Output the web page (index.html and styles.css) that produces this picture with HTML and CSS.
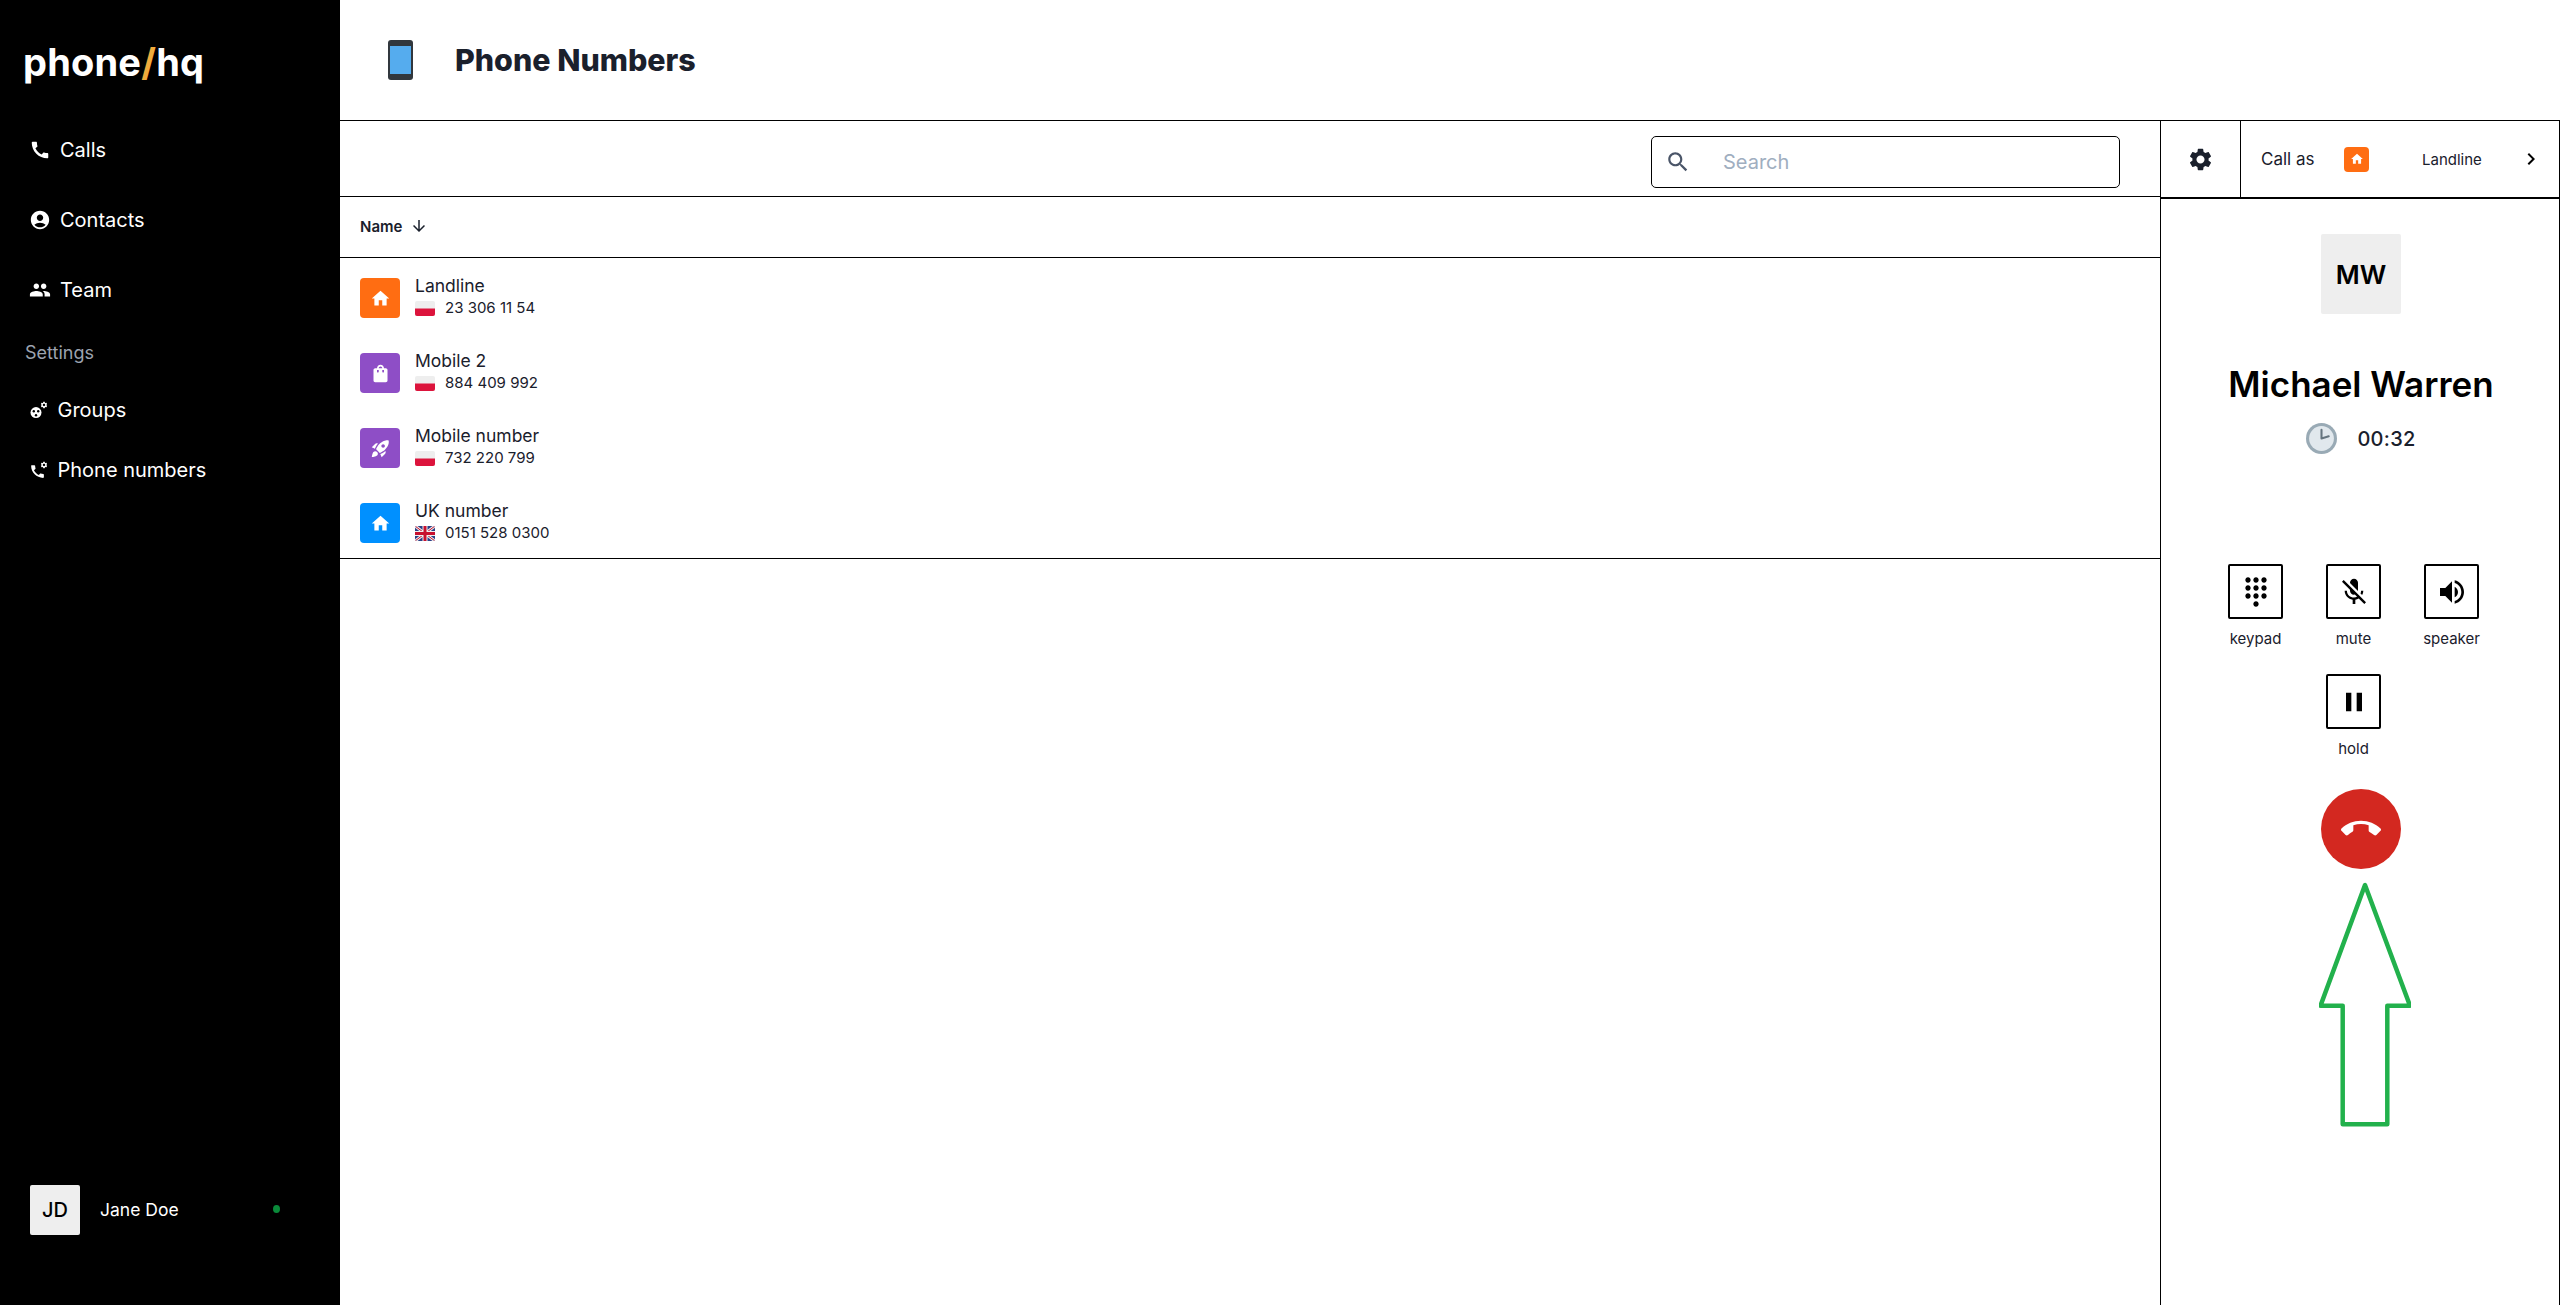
FILE: index.html
```html
<!DOCTYPE html>
<html lang="en">
<head>
<meta charset="utf-8">
<title>Phone Numbers</title>
<link rel="stylesheet" href="styles.css">
</head>
<body>
<svg class="defs" width="0" height="0" aria-hidden="true">
  <symbol id="i-call" viewBox="0 0 24 24"><path d="M20.01 15.38c-1.23 0-2.42-.2-3.53-.56-.35-.12-.74-.03-1.01.24l-1.57 1.97c-2.83-1.35-5.48-3.9-6.89-6.83l1.95-1.66c.27-.28.35-.67.24-1.02-.37-1.11-.56-2.3-.56-3.53 0-.54-.45-.99-.99-.99H4.19C3.65 3 3 3.24 3 3.99 3 13.28 10.73 21 20.01 21c.71 0 .99-.63.99-1.18v-3.45c0-.54-.45-.99-.99-.99z"/></symbol>
  <symbol id="i-account" viewBox="0 0 24 24"><path d="M12 2C6.48 2 2 6.48 2 12s4.48 10 10 10 10-4.48 10-10S17.52 2 12 2zm0 4c1.93 0 3.5 1.57 3.5 3.5S13.93 13 12 13s-3.5-1.57-3.5-3.5S10.07 6 12 6zm0 14c-2.03 0-4.43-.82-6.14-2.88C7.55 15.8 9.68 15 12 15s4.45.8 6.14 2.12C16.43 19.18 14.03 20 12 20z"/></symbol>
  <symbol id="i-people" viewBox="0 0 24 24"><path d="M16 11c1.66 0 2.99-1.34 2.99-3S17.66 5 16 5c-1.66 0-3 1.34-3 3s1.34 3 3 3zm-8 0c1.66 0 2.99-1.34 2.99-3S9.66 5 8 5C6.34 5 5 6.34 5 8s1.34 3 3 3zm0 2c-2.33 0-7 1.17-7 3.5V19h14v-2.5c0-2.33-4.67-3.5-7-3.5zm8 0c-.29 0-.62.02-.97.05 1.16.84 1.97 1.97 1.97 3.45V19h6v-2.5c0-2.33-4.67-3.5-7-3.5z"/></symbol>
  <symbol id="i-gear" viewBox="0 0 24 24"><path d="M19.14 12.94c.04-.3.06-.61.06-.94 0-.32-.02-.64-.07-.94l2.03-1.58c.18-.14.23-.41.12-.61l-1.92-3.32c-.12-.22-.37-.29-.59-.22l-2.39.96c-.5-.38-1.03-.7-1.62-.94l-.36-2.54c-.04-.24-.24-.41-.48-.41h-3.84c-.24 0-.43.17-.47.41l-.36 2.54c-.59.24-1.13.57-1.62.94l-2.39-.96c-.22-.08-.47 0-.59.22L2.74 8.87c-.12.21-.08.47.12.61l2.03 1.58c-.05.3-.09.63-.09.94s.02.64.07.94l-2.03 1.58c-.18.14-.23.41-.12.61l1.92 3.32c.12.22.37.29.59.22l2.39-.96c.5.38 1.03.7 1.62.94l.36 2.54c.05.24.24.41.48.41h3.84c.24 0 .44-.17.47-.41l.36-2.54c.59-.24 1.13-.56 1.62-.94l2.39.96c.22.08.47 0 .59-.22l1.92-3.32c.12-.22.07-.47-.12-.61l-2.01-1.58zM12 15.6c-1.98 0-3.6-1.62-3.6-3.6s1.62-3.6 3.6-3.6 3.6 1.62 3.6 3.6-1.62 3.6-3.6 3.6z"/></symbol>
  <symbol id="i-home" viewBox="0 0 24 24"><path d="M10 20v-6h4v6h5v-8h3L12 3 2 12h3v8z"/></symbol>
  <symbol id="i-bag" viewBox="0 0 24 24"><path d="M18 6h-2c0-2.21-1.79-4-4-4S8 3.79 8 6H6c-1.1 0-2 .9-2 2v12c0 1.1.9 2 2 2h12c1.1 0 2-.9 2-2V8c0-1.1-.9-2-2-2zm-8 4c0 .55-.45 1-1 1s-1-.45-1-1V8h2v2zm2-6c1.1 0 2 .9 2 2h-4c0-1.1.9-2 2-2zm4 6c0 .55-.45 1-1 1s-1-.45-1-1V8h2v2z"/></symbol>
  <symbol id="i-rocket" viewBox="0 0 24 24"><path d="M9.19 6.35c-2.04 2.29-3.44 5.58-3.57 5.89L2 10.69l4.05-4.05c.47-.47 1.15-.68 1.81-.55l1.33.26zM11.17 17s3.74-1.55 5.89-3.7c5.4-5.4 4.5-9.62 4.21-10.57-.95-.3-5.17-1.19-10.57 4.21C8.55 9.09 7 12.83 7 12.83L11.17 17zm6.48-2.19c-2.29 2.04-5.58 3.44-5.89 3.57L13.31 22l4.05-4.05c.47-.47.68-1.15.55-1.81l-.26-1.33zM9 18c0 .83-.34 1.58-.88 2.12C6.94 21.3 2 22 2 22s.7-4.94 1.88-6.12C4.42 15.34 5.17 15 6 15c1.66 0 3 1.34 3 3zm4-9c0-1.1.9-2 2-2s2 .9 2 2-.9 2-2 2-2-.9-2-2z"/></symbol>
  <symbol id="f-pl" viewBox="0 0 20 15"><rect width="20" height="15" rx="2" fill="#eeeeee"/><path d="M0 7.5h20V13a2 2 0 0 1-2 2H2a2 2 0 0 1-2-2z" fill="#dc143c"/></symbol>
  <symbol id="f-uk" viewBox="0 0 20 15"><clipPath id="uk-clip"><rect width="20" height="15" rx="2"/></clipPath><g clip-path="url(#uk-clip)"><rect width="20" height="15" fill="#2a3f86"/><path d="M0 0l20 15M20 0L0 15" stroke="#eeeeee" stroke-width="3"/><path d="M0 0l20 15M20 0L0 15" stroke="#c8102e" stroke-width="1"/><path d="M10 0v15M0 7.5h20" stroke="#eeeeee" stroke-width="5"/><path d="M10 0v15M0 7.5h20" stroke="#c8102e" stroke-width="3"/></g></symbol>
</svg>
<div class="app">
  <aside class="sidebar">
    <div class="logo">phone<span class="logo-slash">/</span>hq</div>
    <nav class="nav">
      <a class="nav-item"><svg class="nav-icon"><use href="#i-call"/></svg>Calls</a>
      <a class="nav-item"><svg class="nav-icon"><use href="#i-account"/></svg>Contacts</a>
      <a class="nav-item"><svg class="nav-icon"><use href="#i-people"/></svg>Team</a>
    </nav>
    <div class="nav-heading">Settings</div>
    <nav class="subnav">
      <a class="sub-item"><svg class="sub-icon" viewBox="0 0 24 24"><circle cx="8" cy="14.6" r="5.5"/><g fill="#000"><circle cx="5.8" cy="13.2" r="1.2"/><circle cx="10.2" cy="13.2" r="1.2"/><circle cx="8" cy="17.2" r="1.2"/></g><use href="#i-gear" x="12" y="3" width="8" height="8"/></svg>Groups</a>
      <a class="sub-item"><svg class="sub-icon" viewBox="0 0 24 24"><use href="#i-call" x="1" y="5" width="17" height="17"/><use href="#i-gear" x="12" y="3" width="8" height="8"/></svg>Phone numbers</a>
    </nav>
    <div class="user">
      <div class="avatar-sm">JD</div>
      <div class="user-name">Jane Doe</div>
      <span class="status-dot"></span>
    </div>
  </aside>
  <div class="content">
    <header class="page-header">
      <svg class="page-emoji" viewBox="0 0 25 40"><rect width="25" height="40" rx="3" fill="#31373d"/><rect x="2" y="6" width="21" height="28" fill="#55acee"/></svg>
      <h1 class="page-title">Phone Numbers</h1>
    </header>
    <div class="workspace">
      <main class="list-pane">
        <div class="toolbar">
          <label class="search">
            <svg class="search-icon" viewBox="0 0 24 24"><path d="M15.5 14h-.79l-.28-.27C15.41 12.59 16 11.11 16 9.5 16 5.91 13.09 3 9.5 3S3 5.91 3 9.5 5.91 16 9.5 16c1.61 0 3.09-.59 4.23-1.57l.27.28v.79l5 4.99L20.49 19l-4.99-5zm-6 0C7.01 14 5 11.99 5 9.5S7.01 5 9.5 5 14 7.01 14 9.5 11.99 14 9.5 14z"/></svg>
            <span class="search-placeholder">Search</span>
          </label>
        </div>
        <div class="table-head">
          <span>Name</span>
          <svg class="sort-icon" viewBox="0 0 24 24"><path d="M20 12l-1.41-1.41L13 16.17V4h-2v12.17l-5.58-5.59L4 12l8 8 8-8z"/></svg>
        </div>
        <ul class="rows">
          <li class="row">
            <span class="tile tile-orange"><svg class="tile-icon"><use href="#i-home"/></svg></span>
            <div class="row-text"><div class="row-name">Landline</div><div class="row-num"><svg class="flag"><use href="#f-pl"/></svg>23 306 11 54</div></div>
          </li>
          <li class="row">
            <span class="tile tile-purple"><svg class="tile-icon"><use href="#i-bag"/></svg></span>
            <div class="row-text"><div class="row-name">Mobile 2</div><div class="row-num"><svg class="flag"><use href="#f-pl"/></svg>884 409 992</div></div>
          </li>
          <li class="row">
            <span class="tile tile-purple"><svg class="tile-icon"><use href="#i-rocket"/></svg></span>
            <div class="row-text"><div class="row-name">Mobile number</div><div class="row-num"><svg class="flag"><use href="#f-pl"/></svg>732 220 799</div></div>
          </li>
          <li class="row">
            <span class="tile tile-blue"><svg class="tile-icon"><use href="#i-home"/></svg></span>
            <div class="row-text"><div class="row-name">UK number</div><div class="row-num"><svg class="flag"><use href="#f-uk"/></svg>0151 528 0300</div></div>
          </li>
        </ul>
      </main>
      <aside class="call-pane">
        <div class="call-top">
          <div class="gear-cell"><svg class="gear-icon"><use href="#i-gear"/></svg></div>
          <div class="call-as">
            <span class="call-as-label">Call as</span>
            <span class="tile-sm"><svg class="tile-sm-icon"><use href="#i-home"/></svg></span>
            <span class="call-as-name">Landline</span>
            <svg class="chevron" viewBox="0 0 24 24"><path d="M10 6L8.59 7.41 13.17 12l-4.58 4.59L10 18l6-6z"/></svg>
          </div>
        </div>
        <div class="call-body">
          <div class="avatar-lg">MW</div>
          <div class="caller">Michael Warren</div>
          <div class="timer">
            <svg class="clock" viewBox="0 0 30 30"><circle cx="15" cy="15" r="15" fill="#99aab5"/><circle cx="15" cy="15" r="12" fill="#e1e8ed"/><path d="M15 6.5V15l7-2.2" fill="none" stroke="#66757f" stroke-width="2" stroke-linecap="round" stroke-linejoin="round"/></svg>
            <span>00:32</span>
          </div>
          <div class="controls">
            <div class="control"><span class="control-btn"><svg class="control-icon" viewBox="0 0 24 24"><path d="M12 19c-1.1 0-2 .9-2 2s.9 2 2 2 2-.9 2-2-.9-2-2-2zM6 1c-1.1 0-2 .9-2 2s.9 2 2 2 2-.9 2-2-.9-2-2-2zm0 6c-1.1 0-2 .9-2 2s.9 2 2 2 2-.9 2-2-.9-2-2-2zm0 6c-1.1 0-2 .9-2 2s.9 2 2 2 2-.9 2-2-.9-2-2-2zm12-8c1.1 0 2-.9 2-2s-.9-2-2-2-2 .9-2 2 .9 2 2 2zm-6 8c-1.1 0-2 .9-2 2s.9 2 2 2 2-.9 2-2-.9-2-2-2zm6 0c-1.1 0-2 .9-2 2s.9 2 2 2 2-.9 2-2-.9-2-2-2zm0-6c-1.1 0-2 .9-2 2s.9 2 2 2 2-.9 2-2-.9-2-2-2zm-6 0c-1.1 0-2 .9-2 2s.9 2 2 2 2-.9 2-2-.9-2-2-2zm0-6c-1.1 0-2 .9-2 2s.9 2 2 2 2-.9 2-2-.9-2-2-2z"/></svg></span><span class="control-label">keypad</span></div>
            <div class="control"><span class="control-btn"><svg class="control-icon" viewBox="0 0 24 24"><path d="M19 11h-1.7c0 .74-.16 1.43-.43 2.05l1.23 1.23c.56-.98.9-2.09.9-3.28zm-4.02.17c0-.06.02-.11.02-.17V5c0-1.66-1.34-3-3-3S9 3.34 9 5v.18l5.98 5.99zM4.27 3L3 4.27l6.01 6.01V11c0 1.66 1.33 3 2.99 3 .22 0 .44-.03.65-.08l1.66 1.66c-.71.33-1.5.52-2.31.52-2.76 0-5.3-2.1-5.3-5.1H5c0 3.41 2.72 6.23 6 6.72V21h2v-3.28c.91-.13 1.77-.45 2.54-.9L19.73 21 21 19.73 4.27 3z"/></svg></span><span class="control-label">mute</span></div>
            <div class="control"><span class="control-btn"><svg class="control-icon" viewBox="0 0 24 24"><path d="M3 9v6h4l5 5V4L7 9H3zm13.5 3c0-1.77-1.02-3.29-2.5-4.03v8.05c1.48-.73 2.5-2.25 2.5-4.02zM14 3.23v2.06c2.89.86 5 3.54 5 6.71s-2.11 5.85-5 6.71v2.06c4.01-.91 7-4.49 7-8.77s-2.99-7.86-7-8.77z"/></svg></span><span class="control-label">speaker</span></div>
            <div class="control"><span class="control-btn"><svg class="control-icon" viewBox="0 0 24 24"><path d="M6 19h4V5H6v14zm8-14v14h4V5h-4z"/></svg></span><span class="control-label">hold</span></div>
          </div>
          <div class="hangup"><svg class="hangup-icon" viewBox="0 0 24 24"><path d="M12 9c-1.6 0-3.15.25-4.6.72v3.1c0 .39-.23.74-.56.9-.98.49-1.87 1.12-2.66 1.85-.18.18-.43.28-.7.28-.28 0-.53-.11-.71-.29L.29 13.08c-.18-.17-.29-.42-.29-.7 0-.28.11-.53.29-.71C3.34 8.78 7.46 7 12 7s8.66 1.78 11.71 4.67c.18.18.29.43.29.71 0 .28-.11.53-.29.71l-2.48 2.48c-.18.18-.43.29-.71.29-.27 0-.52-.11-.7-.28-.79-.74-1.69-1.36-2.67-1.85-.33-.16-.56-.5-.56-.9v-3.1C15.15 9.25 13.6 9 12 9z"/></svg></div>
          <svg class="arrow" viewBox="0 0 92 246"><path d="M46 3L1.5 123.7h22.2v118.6h44.6V123.7H91z" fill="none" stroke="#22b14c" stroke-width="4.5" stroke-linejoin="round"/></svg>
        </div>
      </aside>
    </div>
  </div>
</div>
</body>
</html>
```
FILE: styles.css
```css
* { box-sizing: border-box; }
html, body { margin: 0; height: 100%; }
body { font-family: Inter, "Noto Sans", sans-serif; color: #1a202c; background: #fff; overflow: hidden; }
.defs { position: absolute; }
.app { display: flex; height: 1305px; }

.sidebar { width: 340px; flex: none; background: #000; color: #fff; display: flex; flex-direction: column; }
.logo { font-size: 38px; font-weight: 700; line-height: 44px; padding: 40px 0 0 23px; letter-spacing: .2px; }
.logo-slash { color: #f0ab3c; }
.nav { margin-top: 31px; display: flex; flex-direction: column; }
.nav-item { height: 70px; display: flex; align-items: center; padding-left: 29px; gap: 9px; font-size: 20px; }
.nav-icon { width: 22px; height: 22px; fill: #fff; }
.nav-heading { font-size: 18px; line-height: 24px; color: #9ca3af; padding-left: 25px; margin-top: 16px; }
.subnav { margin-top: 15px; display: flex; flex-direction: column; }
.sub-item { height: 60px; display: flex; align-items: center; padding-left: 28px; gap: 5.5px; font-size: 20px; }
.sub-icon { width: 24px; height: 24px; fill: #fff; }
.user { margin-top: auto; margin-bottom: 70px; padding-left: 30px; display: flex; align-items: center; }
.avatar-sm { width: 50px; height: 50px; border-radius: 2px; background: #eee; color: #000; display: flex; align-items: center; justify-content: center; font-size: 20px; font-weight: 500; }
.user-name { margin: 0 0 2px 20px; font-size: 17.5px; width: 173px; }
.status-dot { width: 7px; height: 8px; border-radius: 50%; background: #0a8a3a; margin-bottom: 2px; }

.content { flex: 1; min-width: 0; display: flex; flex-direction: column; }
.page-header { height: 121px; flex: none; border-bottom: 1px solid #000; display: flex; align-items: center; padding-left: 48px; }
.page-emoji { width: 25px; height: 40px; }
.page-title { margin: 0 0 0 42px; font-size: 30.4px; font-weight: 800; line-height: 40px; }
.workspace { flex: 1; display: flex; min-height: 0; }

.list-pane { flex: 1; min-width: 0; }
.toolbar { height: 76px; border-bottom: 1px solid #000; display: flex; align-items: flex-start; justify-content: flex-end; padding: 15px 40px 0 0; }
.search { width: 469px; height: 52px; border: 1px solid #000; border-radius: 5px; display: flex; align-items: center; padding-left: 13px; }
.search-icon { width: 26px; height: 26px; fill: #4a5568; }
.search-placeholder { margin-left: 32px; font-size: 20px; color: #a0aec0; }
.table-head { height: 61px; border-bottom: 1px solid #000; display: flex; align-items: center; padding: 0 0 2px 20px; font-size: 15px; font-weight: 600; gap: 8px; }
.sort-icon { width: 18px; height: 18px; fill: #1a202c; }
.rows { list-style: none; margin: 0; padding: 0; border-bottom: 1px solid #000; }
.row { height: 75px; display: flex; align-items: flex-start; padding: 20px 0 0 20px; }
.tile { width: 40px; height: 40px; border-radius: 4px; display: flex; align-items: center; justify-content: center; }
.tile-orange { background: #ff6d12; }
.tile-purple { background: #8e4ec6; }
.tile-blue { background: #0090ff; }
.tile-icon { width: 21px; height: 21px; fill: #fff; }
.row-text { margin: -3px 0 0 15px; }
.row-name { font-size: 17.5px; line-height: 22px; }
.row-num { font-size: 15px; line-height: 22px; display: flex; align-items: center; }
.flag { width: 20px; height: 15px; margin-right: 10px; }

.call-pane { width: 400px; flex: none; border-left: 1px solid #000; border-right: 1px solid #000; display: flex; flex-direction: column; }
.call-top { height: 78px; flex: none; border-bottom: 2px solid #000; display: flex; }
.gear-cell { width: 80px; border-right: 1px solid #000; display: flex; align-items: center; justify-content: center; }
.gear-icon { width: 27px; height: 27px; fill: #1a202c; }
.call-as { flex: 1; display: flex; align-items: center; padding-left: 20px; }
.call-as-label { font-size: 17px; width: 83px; }
.tile-sm { width: 25px; height: 25px; border-radius: 4px; background: #ff6d12; display: flex; align-items: center; justify-content: center; }
.tile-sm-icon { width: 14px; height: 14px; fill: #fff; }
.call-as-name { margin-left: 53px; font-size: 15px; width: 97px; }
.chevron { width: 24px; height: 24px; fill: #000; }
.call-body { position: relative; flex: 1; display: flex; flex-direction: column; align-items: center; padding: 35px 0 0 2px; }
.avatar-lg { width: 80px; height: 80px; border-radius: 2px; background: #eee; color: #000; display: flex; align-items: center; justify-content: center; font-size: 26px; font-weight: 600; }
.caller { margin-top: 48px; font-size: 35px; line-height: 44px; font-weight: 600; color: #000; }
.timer { margin-top: 17px; display: flex; align-items: center; gap: 20px; font-size: 20px; font-weight: 500; letter-spacing: .3px; }
.clock { width: 31px; height: 31px; }
.controls { margin: 110px 15px 0 0; width: 294px; display: flex; flex-wrap: wrap; justify-content: center; row-gap: 25px; }
.control { width: 98px; display: flex; flex-direction: column; align-items: center; }
.control-btn { width: 55px; height: 55px; border: 2px solid #000; border-radius: 2px; display: flex; align-items: center; justify-content: center; }
.control-icon { width: 32px; height: 32px; fill: #000; }
.control-label { margin-top: 10px; font-size: 15px; line-height: 20px; }
.hangup { margin-top: 30px; width: 80px; height: 80px; border-radius: 50%; background: #d32820; display: flex; align-items: center; justify-content: center; }
.hangup-icon { width: 40px; height: 40px; fill: #fff; }
.arrow { position: absolute; left: 158px; top: 683px; width: 92px; height: 246px; }
```
